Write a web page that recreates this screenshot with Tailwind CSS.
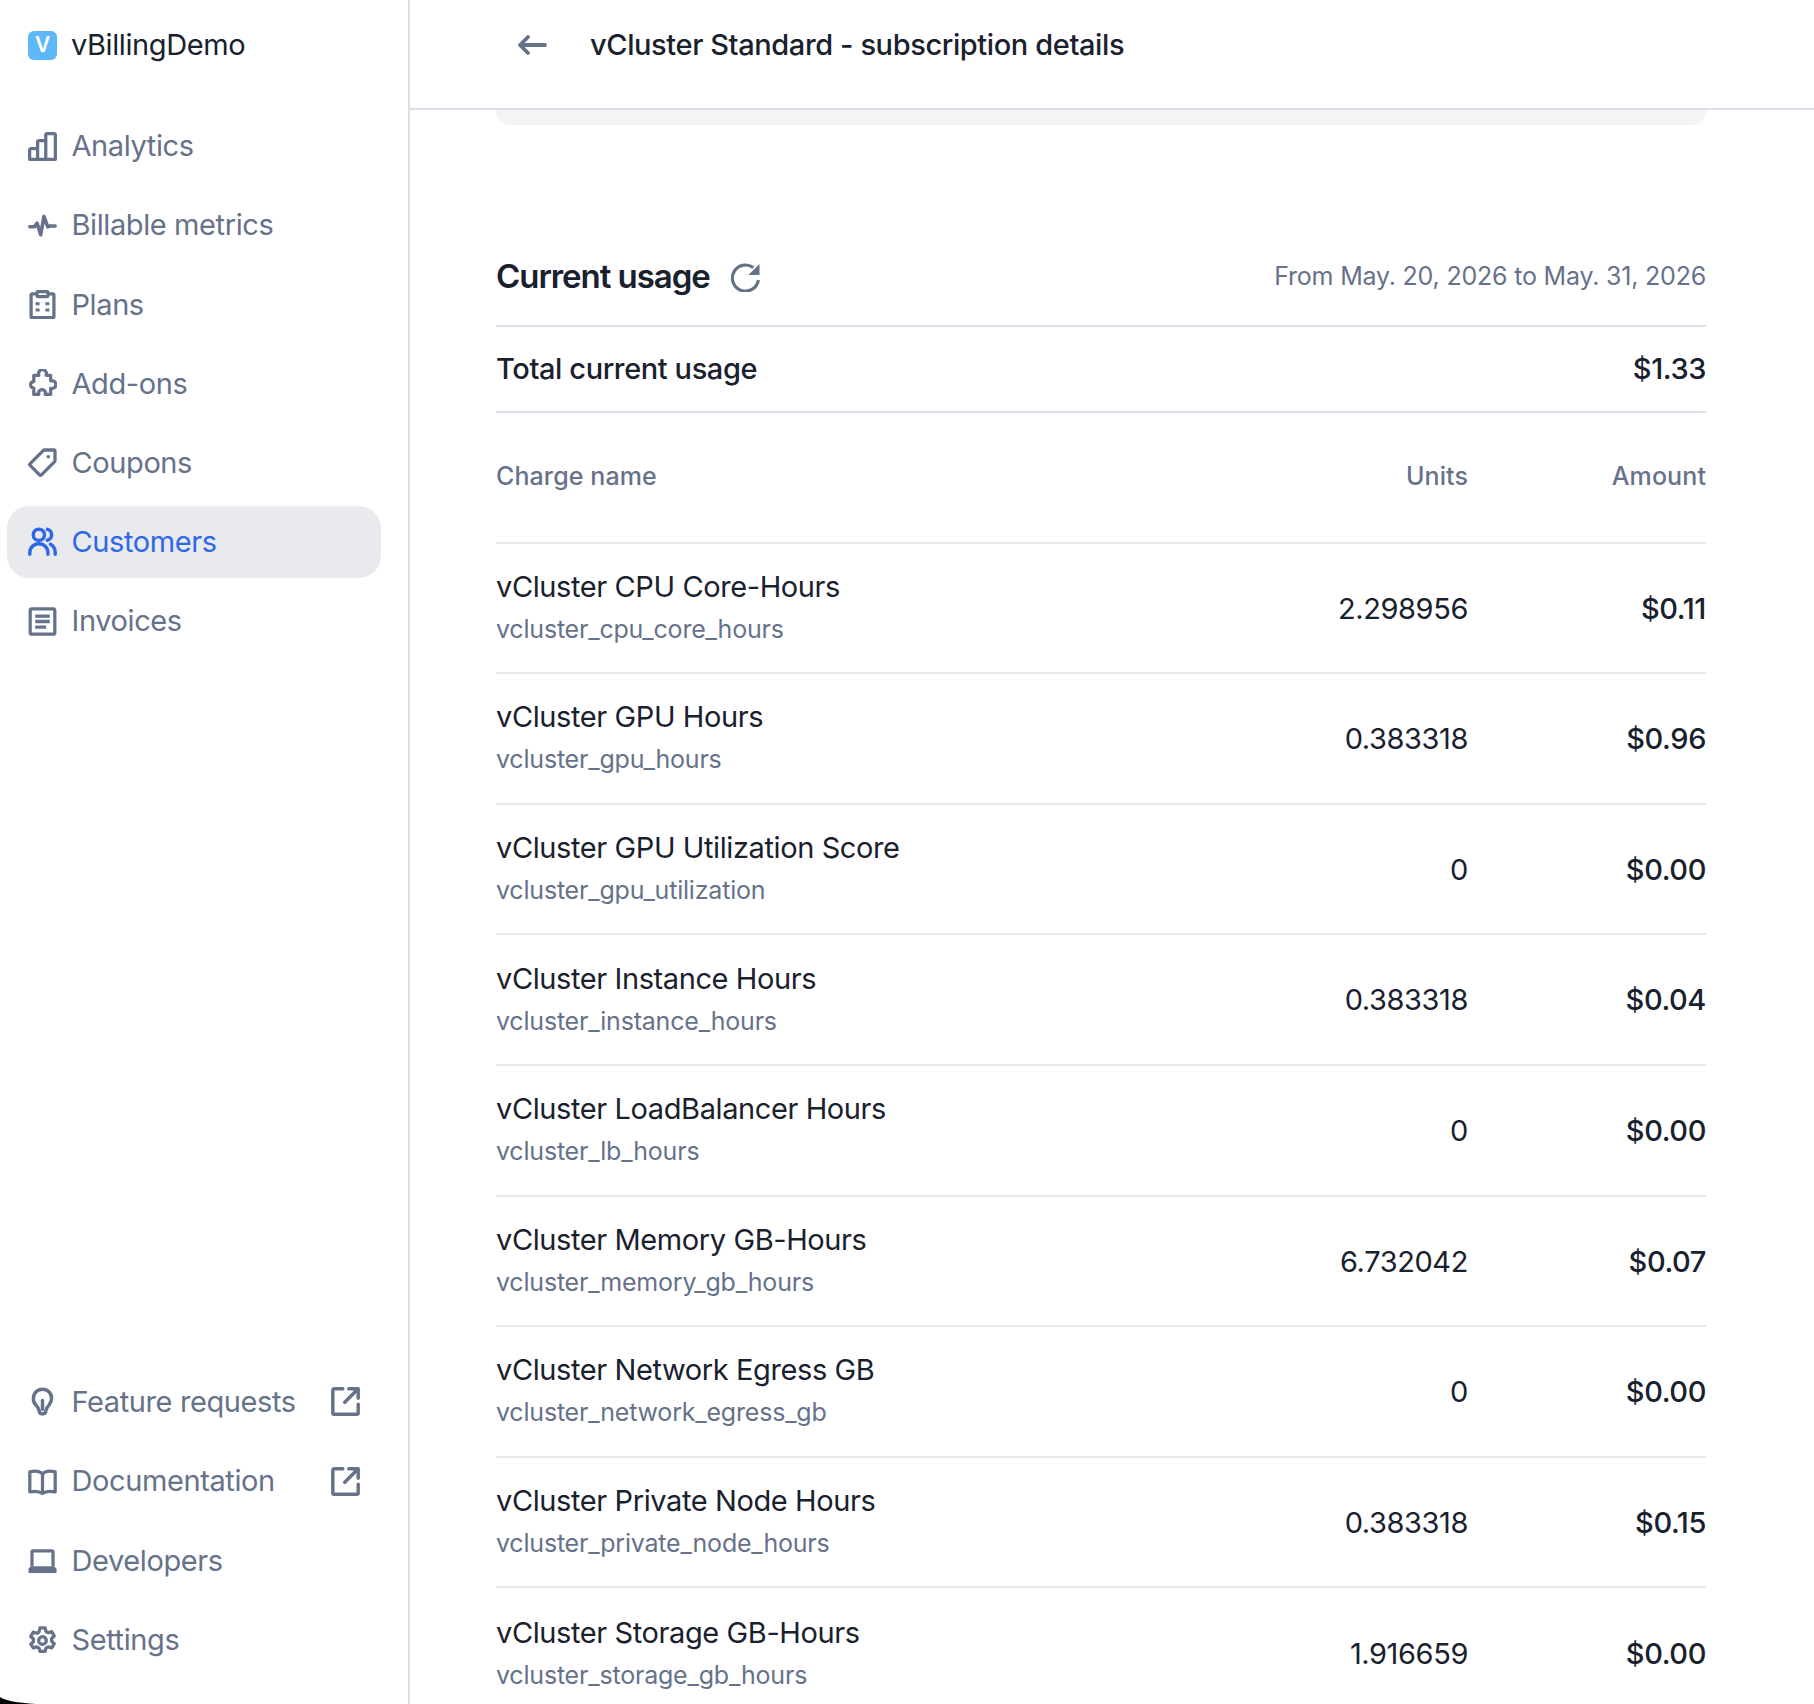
<!DOCTYPE html>
<html lang="en">
<head>
<meta charset="utf-8">
<title>vCluster Standard - subscription details</title>
<script src="https://cdn.jsdelivr.net/npm/@tailwindcss/browser@4"></script>
</head>
<body class="m-0 bg-white">
<div class="relative flex h-[1704px] w-[1814px] overflow-hidden bg-white font-['Inter',sans-serif] text-[29px] tracking-[-0.4px] text-[#19212e] antialiased">
  <aside class="flex h-full w-[410px] shrink-0 flex-col justify-between border-r-2 border-[#d9dee7] pb-[28px]">
    <div>
      <div class="flex h-[90px] items-center gap-[14px] pl-[28px]">
        <div class="flex h-[29px] w-[29px] items-center justify-center rounded-[6px] bg-[#5cb8f9] text-[21px] font-semibold text-white">V</div>
        <span>vBillingDemo</span>
      </div>
      <nav class="mt-[20px] flex flex-col gap-[7.200px] px-[7px] text-[#66728a]">
        <a class="flex h-[72px] w-[374px] items-center gap-[14.500px] pl-[21px]">
          <svg class="h-[29px] w-[29px]" viewBox="0 0 16 16" fill="none" stroke="currentColor" stroke-width="1.800" stroke-linejoin="round"><path d="M.9 15.100V10a.8.8 0 0 1 .8-.8h3.600v5.900H.9ZM5.300 15.100V5.500a.8.8 0 0 1 .8-.8h3.700v10.400H5.300ZM9.800 15.100V1.700a.8.8 0 0 1 .8-.8h3.700a.8.8 0 0 1 .8.8v13.400H9.800Z"/></svg>
          <span>Analytics</span>
        </a>
        <a class="flex h-[72px] w-[374px] items-center gap-[14.500px] pl-[21px]">
          <svg class="h-[29px] w-[29px]" viewBox="0 0 16 16" fill="none" stroke="currentColor" stroke-width="2" stroke-linecap="round" stroke-linejoin="round"><path d="M1 8.700h2.600l1.400-2 2 6.400L8.800 3l2.100 5.800 1.200-.5H15"/></svg>
          <span>Billable metrics</span>
        </a>
        <a class="flex h-[72px] w-[374px] items-center gap-[14.500px] pl-[21px]">
          <svg class="h-[29px] w-[29px]" viewBox="0 0 16 16" fill="none" stroke="currentColor" stroke-width="1.800" stroke-linejoin="round"><path d="M5 2.200H2.200a.5.5 0 0 0-.5.5v12.100c0 .3.200.5.500.5h11.600c.3 0 .5-.2.5-.5V2.700a.5.5 0 0 0-.5-.5H11"/><rect x="5" y=".9" width="6" height="2.700" rx=".6"/><path stroke-width="1.700" d="M4.200 7.600h2.200M9.600 7.600h2.200M4.200 11h2.200M9.600 11h2.200"/></svg>
          <span>Plans</span>
        </a>
        <a class="flex h-[72px] w-[374px] items-center gap-[14.500px] pl-[21px]">
          <svg class="h-[29px] w-[29px]" viewBox="0 0 16 16" fill="none" stroke="currentColor" stroke-width="1.800" stroke-linejoin="round"><path d="M3.500 3.500H6a2.200 2.200 0 1 1 4 0h2.500v3a2.200 2.200 0 1 1 0 4.200v3.300H9.500a1.900 1.900 0 1 0-3.500 0H3.200v-3.500a1.800 1.800 0 1 1 0-3.600V3.500Z"/></svg>
          <span>Add-ons</span>
        </a>
        <a class="flex h-[72px] w-[374px] items-center gap-[14.500px] pl-[21px]">
          <svg class="h-[29px] w-[29px]" viewBox="0 0 16 16" fill="none" stroke="currentColor" stroke-width="1.800" stroke-linejoin="round"><path d="M9 1.100h5.200c.4 0 .7.300.7.700V7c0 .2-.1.400-.2.500l-7.300 7.300c-.3.300-.7.300-1 0L1.200 9.600c-.3-.3-.3-.7 0-1L8.500 1.300c.1-.1.300-.2.500-.2Z"/><circle cx="11.200" cy="4.800" r=".6" fill="currentColor" stroke-width=".8"/></svg>
          <span>Coupons</span>
        </a>
        <a class="flex h-[72px] w-[374px] items-center gap-[14.500px] rounded-[22px] bg-[#e8eaee] pl-[21px] text-[#2f68e6]">
          <svg class="h-[29px] w-[29px]" viewBox="0 0 16 16" fill="none" stroke="currentColor" stroke-width="1.900" stroke-linecap="round"><circle cx="6" cy="4.300" r="3.100"/><path d="M1 15v-.8a5 5 0 0 1 10 0v.8M10.700 1.300a3.100 3.100 0 0 1 0 6M12.400 9.500a5.200 5.200 0 0 1 2.600 4.700v.8"/></svg>
          <span>Customers</span>
        </a>
        <a class="flex h-[72px] w-[374px] items-center gap-[14.500px] pl-[21px]">
          <svg class="h-[29px] w-[29px]" viewBox="0 0 16 16" fill="none" stroke="currentColor" stroke-width="1.800" stroke-linejoin="round"><rect x="1.200" y="1" width="13.600" height="14" rx="1"/><path d="M4 5h8M4 8h8M4 11.100h6"/></svg>
          <span>Invoices</span>
        </a>
      </nav>
    </div>
    <nav class="flex flex-col gap-[7.400px] px-[7px] text-[#66728a]">
      <a class="flex h-[72px] w-[374px] items-center gap-[14.500px] pl-[21px]">
        <svg class="h-[29px] w-[29px]" viewBox="0 0 16 16" fill="none" stroke="currentColor" stroke-width="1.900" stroke-linecap="round" stroke-linejoin="round"><path d="M8 14.900c-1.300 0-1.800-1-1.900-2-.2-1.300-.8-2-1.700-2.900A5 5 0 0 1 3 6.200a5 5 0 0 1 10 0c0 1.500-.6 2.800-1.400 3.800-.9.900-1.500 1.600-1.700 2.900-.1 1-.6 2-1.900 2Z"/><path d="M8 12.300V7.400"/></svg>
        <span>Feature requests</span>
        <svg class="absolute left-[331px] h-[29px] w-[29px]" viewBox="0 0 16 16" fill="none" stroke="currentColor" stroke-width="1.900" stroke-linecap="round" stroke-linejoin="round"><path d="M6.500 1H1.700a.7.700 0 0 0-.7.700v12.600c0 .4.300.7.700.7h12.600c.4 0 .7-.3.700-.7V9.500M9.800 1H15v5.200M15 1 7.600 8.400"/></svg>
      </a>
      <a class="flex h-[72px] w-[374px] items-center gap-[14.500px] pl-[21px]">
        <svg class="h-[29px] w-[29px]" viewBox="0 0 16 16" fill="none" stroke="currentColor" stroke-width="1.800" stroke-linejoin="round"><path d="M8 3.700C6.500 2.400 3.500 2.100 1 2.700v11c2.600-.5 5.500-.3 7 .9 1.500-1.200 4.400-1.400 7-.9v-11C12.500 2.100 9.500 2.400 8 3.700ZM8 3.700v10.900"/></svg>
        <span>Documentation</span>
        <svg class="absolute left-[331px] h-[29px] w-[29px]" viewBox="0 0 16 16" fill="none" stroke="currentColor" stroke-width="1.900" stroke-linecap="round" stroke-linejoin="round"><path d="M6.500 1H1.700a.7.700 0 0 0-.7.700v12.600c0 .4.300.7.700.7h12.600c.4 0 .7-.3.700-.7V9.500M9.800 1H15v5.200M15 1 7.600 8.400"/></svg>
      </a>
      <a class="flex h-[72px] w-[374px] items-center gap-[14.500px] pl-[21px]">
        <svg class="h-[29px] w-[29px]" viewBox="0 0 16 16" fill="none" stroke="currentColor" stroke-width="1.800" stroke-linejoin="round"><path d="M2.200 11.300V3.200c0-.3.200-.5.500-.5h10.600c.3 0 .5.200.5.500v8.100"/><path stroke-width="1.300" d="M.9 14.300V12.700l1-.9h12.200l1 .9v1.600H.9Z" fill="currentColor"/></svg>
        <span>Developers</span>
      </a>
      <a class="flex h-[72px] w-[374px] items-center gap-[14.500px] pl-[21px]">
        <svg class="h-[29px] w-[29px]" viewBox="0 0 16 16" fill="none" stroke="currentColor" stroke-width="1.800" stroke-linejoin="round"><circle cx="8" cy="8" r="2.100"/><path d="M6.600 1h2.800l.5 2 1.200.7 2-.6 1.400 2.400-1.500 1.400v1.400l1.500 1.400-1.400 2.400-2-.6-1.200.7-.5 1.800H6.600l-.5-1.800-1.200-.7-2 .6L1.500 10 3 8.600V7.200L1.500 5.800 2.900 3.400l2 .6 1.200-.7.500-2.300Z"/></svg>
        <span>Settings</span>
      </a>
    </nav>
  </aside>

  <main class="min-w-0 flex-1">
    <header class="flex h-[110px] items-center border-b-2 border-[#d9dee7] pb-[19px] pl-[107px]">
      <svg class="h-[30px] w-[30px]" viewBox="0 0 30 30" fill="none" stroke="#66728a" stroke-width="3.800" stroke-linecap="round" stroke-linejoin="round"><path d="M28 15H3M11 7l-8 8 8 8"/></svg>
      <h1 class="ml-[43px] font-medium">vCluster Standard - subscription details</h1>
    </header>
    <div class="pl-[86px] pr-[108px]">
      <div class="h-[15px] rounded-b-[14px] bg-[#f3f4f6]"></div>
      <section class="mt-[97px]">
        <div class="flex h-[105px] items-center justify-between border-b-2 border-[#d9dee7] pt-[6px]">
          <div class="flex items-center gap-[21px]">
            <h2 class="text-[33px] font-semibold tracking-[-1.050px]">Current usage</h2>
            <svg class="mt-[2px] h-[29px] w-[29px]" viewBox="0 0 30 30" fill="none" stroke="#66728a" stroke-width="3.300"><path d="M28.300 17.500A13.500 13.500 0 1 1 23 4.800"/><path d="M29.500 1v11.500H18Z" fill="#66728a" stroke="none"/></svg>
          </div>
          <span class="text-[25px] tracking-[-0.2px] text-[#66728a]">From May. 20, 2026 to May. 31, 2026</span>
        </div>
        <div class="flex h-[86px] items-center justify-between border-b-2 border-[#d9dee7] font-medium">
          <span>Total current usage</span><span>$1.33</span>
        </div>
        <div class="grid h-[130.600px] grid-cols-[1fr_200px_238px] items-center border-b-2 border-[#e4e7ec] pb-[2px] text-right text-[25px] font-medium tracking-[0.1px] text-[#66728a]">
          <span class="text-left">Charge name</span><span>Units</span><span>Amount</span>
        </div>
        <div class="grid h-[130.600px] grid-cols-[1fr_200px_238px] items-center border-b-2 border-[#e4e7ec] pt-[1px] text-right">
          <div class="pb-[5px] text-left"><div class="leading-[46px]">vCluster CPU Core-Hours</div><div class="text-[25px] leading-[38px] tracking-[-0.2px] text-[#66728a]">vcluster_cpu_core_hours</div></div>
          <span>2.298956</span><span class="font-medium">$0.11</span>
        </div>
        <div class="grid h-[130.600px] grid-cols-[1fr_200px_238px] items-center border-b-2 border-[#e4e7ec] pt-[1px] text-right">
          <div class="pb-[5px] text-left"><div class="leading-[46px]">vCluster GPU Hours</div><div class="text-[25px] leading-[38px] tracking-[-0.2px] text-[#66728a]">vcluster_gpu_hours</div></div>
          <span>0.383318</span><span class="font-medium">$0.96</span>
        </div>
        <div class="grid h-[130.600px] grid-cols-[1fr_200px_238px] items-center border-b-2 border-[#e4e7ec] pt-[1px] text-right">
          <div class="pb-[5px] text-left"><div class="leading-[46px]">vCluster GPU Utilization Score</div><div class="text-[25px] leading-[38px] tracking-[-0.2px] text-[#66728a]">vcluster_gpu_utilization</div></div>
          <span>0</span><span class="font-medium">$0.00</span>
        </div>
        <div class="grid h-[130.600px] grid-cols-[1fr_200px_238px] items-center border-b-2 border-[#e4e7ec] pt-[1px] text-right">
          <div class="pb-[5px] text-left"><div class="leading-[46px]">vCluster Instance Hours</div><div class="text-[25px] leading-[38px] tracking-[-0.2px] text-[#66728a]">vcluster_instance_hours</div></div>
          <span>0.383318</span><span class="font-medium">$0.04</span>
        </div>
        <div class="grid h-[130.600px] grid-cols-[1fr_200px_238px] items-center border-b-2 border-[#e4e7ec] pt-[1px] text-right">
          <div class="pb-[5px] text-left"><div class="leading-[46px]">vCluster LoadBalancer Hours</div><div class="text-[25px] leading-[38px] tracking-[-0.2px] text-[#66728a]">vcluster_lb_hours</div></div>
          <span>0</span><span class="font-medium">$0.00</span>
        </div>
        <div class="grid h-[130.600px] grid-cols-[1fr_200px_238px] items-center border-b-2 border-[#e4e7ec] pt-[1px] text-right">
          <div class="pb-[5px] text-left"><div class="leading-[46px]">vCluster Memory GB-Hours</div><div class="text-[25px] leading-[38px] tracking-[-0.2px] text-[#66728a]">vcluster_memory_gb_hours</div></div>
          <span>6.732042</span><span class="font-medium">$0.07</span>
        </div>
        <div class="grid h-[130.600px] grid-cols-[1fr_200px_238px] items-center border-b-2 border-[#e4e7ec] pt-[1px] text-right">
          <div class="pb-[5px] text-left"><div class="leading-[46px]">vCluster Network Egress GB</div><div class="text-[25px] leading-[38px] tracking-[-0.2px] text-[#66728a]">vcluster_network_egress_gb</div></div>
          <span>0</span><span class="font-medium">$0.00</span>
        </div>
        <div class="grid h-[130.600px] grid-cols-[1fr_200px_238px] items-center border-b-2 border-[#e4e7ec] pt-[1px] text-right">
          <div class="pb-[5px] text-left"><div class="leading-[46px]">vCluster Private Node Hours</div><div class="text-[25px] leading-[38px] tracking-[-0.2px] text-[#66728a]">vcluster_private_node_hours</div></div>
          <span>0.383318</span><span class="font-medium">$0.15</span>
        </div>
        <div class="grid h-[130.600px] grid-cols-[1fr_200px_238px] items-center pt-[1px] text-right">
          <div class="pb-[5px] text-left"><div class="leading-[46px]">vCluster Storage GB-Hours</div><div class="text-[25px] leading-[38px] tracking-[-0.2px] text-[#66728a]">vcluster_storage_gb_hours</div></div>
          <span>1.916659</span><span class="font-medium">$0.00</span>
        </div>
      </section>
    </div>
  </main>
  <svg class="absolute bottom-0 left-0 h-[7px] w-[40px]" viewBox="0 0 40 7"><path d="M0 0C6 4 16 5.500 36 7H0Z" fill="#000"/></svg>
</div>
</body>
</html>
